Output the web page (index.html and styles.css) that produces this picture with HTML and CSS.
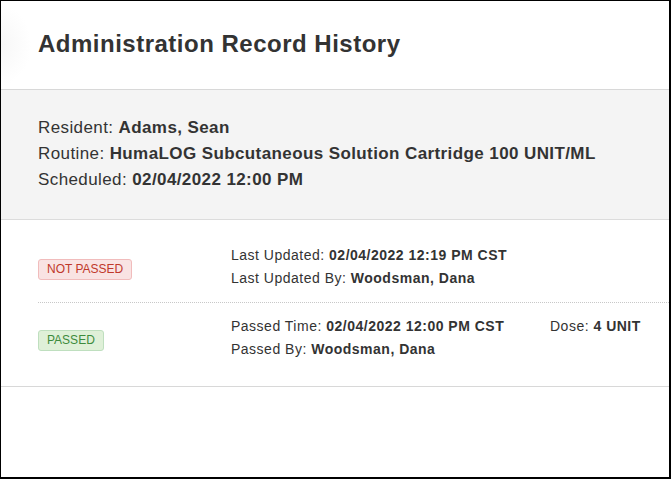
FILE: index.html
```html
<!DOCTYPE html>
<html lang="en">
<head>
    <meta charset="UTF-8">
    <meta name="viewport" content="width=device-width, initial-scale=1.0">
    <title>Administration Record History</title>
    <link rel="stylesheet" href="styles.css">
</head>
<body>
    <div class="modal">
        <div class="modal-head">
            <h1>Administration Record History</h1>
        </div>
        <div class="summary">
            <div class="line">Resident: <b>Adams, Sean</b></div>
            <div class="line">Routine: <b>HumaLOG Subcutaneous Solution Cartridge 100 UNIT/ML</b></div>
            <div class="line">Scheduled: <b>02/04/2022 12:00 PM</b></div>
        </div>
        <div class="records">
            <div class="record">
                <div class="status">
                    <span class="badge bad">NOT PASSED</span>
                </div>
                <div class="detail">
                    <div>Last Updated: <b>02/04/2022 12:19 PM CST</b></div>
                    <div>Last Updated By: <b>Woodsman, Dana</b></div>
                </div>
            </div>
            <div class="record">
                <div class="status">
                    <span class="badge good">PASSED</span>
                </div>
                <div class="detail">
                    <div>Passed Time: <b>02/04/2022 12:00 PM CST</b></div>
                    <div>Passed By: <b>Woodsman, Dana</b></div>
                </div>
                <div class="dose">Dose: <b>4 UNIT</b></div>
            </div>
        </div>
    </div>
</body>
</html>
```

FILE: styles.css
```css
html,body{
    margin:0;
    padding:0;
    background:#fff;
}
body{
    font-family:"Liberation Sans",Arial,sans-serif;
    color:#333;
}
.modal{
    box-sizing:border-box;
    width:671px;
    height:479px;
    border-left:1px solid #000;
    border-top:1px solid #000;
    border-right:2px solid #000;
    border-bottom:2px solid #000;
}
.modal-head{
    height:88px;
    border-bottom:1px solid #d8d8d8;
    display:flex;
    align-items:center;
    padding-left:37px;
    background:radial-gradient(ellipse 30px 40px at 0 44px,#f7f7f7,#fff);
}
.modal-head h1{
    margin:0;
    font-size:24px;
    letter-spacing:0.5px;
    font-weight:bold;
    padding-bottom:3px;
}
.summary{
    background:#f4f4f4;
    border-bottom:1px solid #dcdcdc;
    padding:25px 37px 26px;
    font-size:17px;
    line-height:26px;
    letter-spacing:0.4px;
}
.records{
    padding:12px 0 13px 37px;
    border-bottom:1px solid #d8d8d8;
}
.record{
    display:flex;
    align-items:flex-start;
    padding:12px 0 13px;
    font-size:14px;
    line-height:22.5px;
    letter-spacing:0.5px;
}
.record + .record{
    border-top:1px dotted #c8c8c8;
}
.status{
    width:193px;
    padding-top:13px;
}
.badge{
    display:inline-block;
    height:19px;
    line-height:19px;
    padding:0 8px;
    font-size:12px;
    letter-spacing:0;
    border-radius:3px;
}
.bad{
    color:#c0392b;
    background:#f9e3e3;
    border:1px solid #f1bcbc;
}
.good{
    color:#3d8b3d;
    background:#dff0d8;
    border:1px solid #bfdfbf;
}
.detail{
    width:319px;
}
```
